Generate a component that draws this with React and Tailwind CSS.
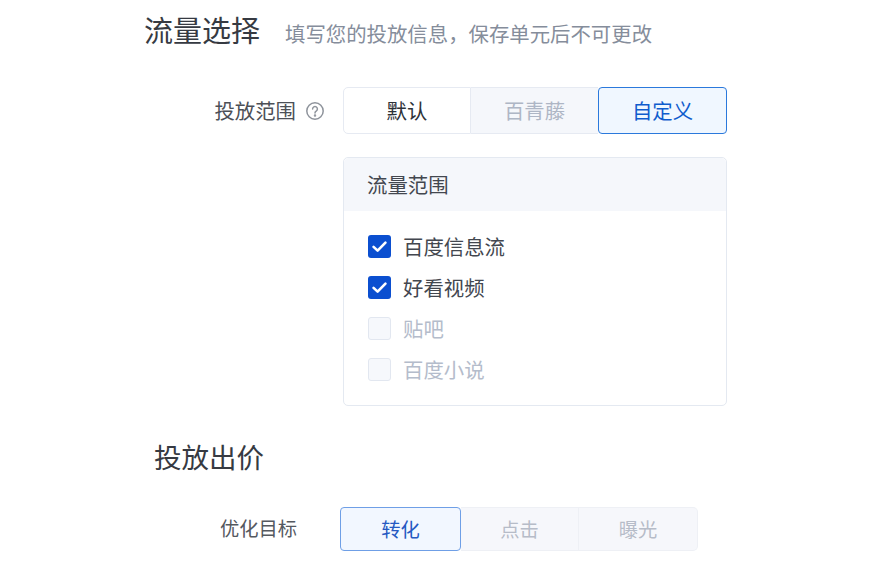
const font = { fontFamily: '"Noto Sans CJK SC", sans-serif' };

function Checkbox({ label, checked }) {
  return (
    <div className="flex h-[41px] items-center gap-[12px]">
      {checked ? (
        <span className="flex h-[23px] w-[23px] items-center justify-center rounded-[3px] bg-[#0b4fd0]">
          <svg viewBox="0 0 16 16" className="h-[19px] w-[19px]" fill="none" stroke="white" strokeWidth="2.2" strokeLinecap="round" strokeLinejoin="round">
            <path d="M3 8.3l3.4 3.2L13 4.8" />
          </svg>
        </span>
      ) : (
        <span className="h-[23px] w-[23px] rounded-[3px] border border-[#e2e7f0] bg-[#f6f8fc]" />
      )}
      <span className={`text-[20.4px] leading-none ${checked ? "text-[#43474f]" : "text-[#b4bccb]"}`}>{label}</span>
    </div>
  );
}

export default function App() {
  return (
    <div style={font} className="h-[569px] w-[890px] overflow-hidden bg-white">
      <div className="flex h-[62px] items-center pl-[144px]">
        <h1 className="mb-[3px] text-[29px] font-normal leading-none text-[#363a42]">流量选择</h1>
        <span className="ml-[25px] mt-[5px] text-[20.4px] leading-none text-[#858d9b]">填写您的投放信息，保存单元后不可更改</span>
      </div>

      <div className="mt-[25px] flex items-center">
        <div className="flex w-[343px] items-center justify-end pr-[18px]">
          <span className="text-[20.4px] leading-none text-[#4c5057]">投放范围</span>
          <svg viewBox="0 0 20 20" className="ml-[9px] h-[20px] w-[20px]" fill="none" stroke="#8f949c" strokeWidth="1.5" strokeLinecap="round">
            <circle cx="10" cy="10" r="8.2" />
            <path d="M7.6 8a2.4 2.4 0 1 1 3.6 2.1c-.8.5-1.2 1-1.2 1.8" />
            <circle cx="10" cy="14.4" r=".5" fill="#8f949c" />
          </svg>
        </div>
        <div className="flex h-[47px] w-[384px] text-[20.4px]">
          <div className="flex w-[128px] items-center justify-center rounded-l-[5px] border border-[#e6eaf2] text-[#2d3138]">默认</div>
          <div className="flex w-[127px] items-center justify-center border-y border-[#e6eaf2] bg-[#f5f7fb] text-[#aeb6c5]">百青藤</div>
          <div className="flex w-[129px] items-center justify-center rounded-[4px] border-[1.5px] border-[#2b79dc] bg-[#f0f7ff] text-[#0f5ccd]">自定义</div>
        </div>
      </div>

      <div className="ml-[343px] mt-[23px] h-[249px] w-[384px] rounded-[5px] border border-[#e4e9f1]">
        <div className="flex h-[53px] items-center rounded-t-[5px] bg-[#f5f7fb] pl-[23px] text-[20.4px] leading-none text-[#43474f]">流量范围</div>
        <div className="pl-[24px] pt-[15px]">
          <Checkbox label="百度信息流" checked />
          <Checkbox label="好看视频" checked />
          <Checkbox label="贴吧" />
          <Checkbox label="百度小说" />
        </div>
      </div>

      <h2 className="ml-[154px] mt-[32px] text-[27.5px] font-normal leading-[36px] text-[#363a42]">投放出价</h2>

      <div className="mt-[33px] flex items-center">
        <div className="w-[297px] whitespace-nowrap pl-[220px] text-[19.3px] leading-none text-[#55595f]">优化目标</div>
        <div className="ml-[43px] flex h-[44px] w-[358px] text-[19.3px]">
          <div className="flex w-[121px] items-center justify-center rounded-[4px] border-[1.5px] border-[#6f9fe6] bg-[#f2f7ff] text-[#2559c2]">转化</div>
          <div className="flex w-[118px] items-center justify-center border-y border-r border-[#eef0f5] bg-[#f6f7fb] text-[#b6bcc8]">点击</div>
          <div className="flex w-[119px] items-center justify-center rounded-r-[5px] border-y border-r border-[#eef0f5] bg-[#f6f7fb] text-[#b6bcc8]">曝光</div>
        </div>
      </div>
    </div>
  );
}
